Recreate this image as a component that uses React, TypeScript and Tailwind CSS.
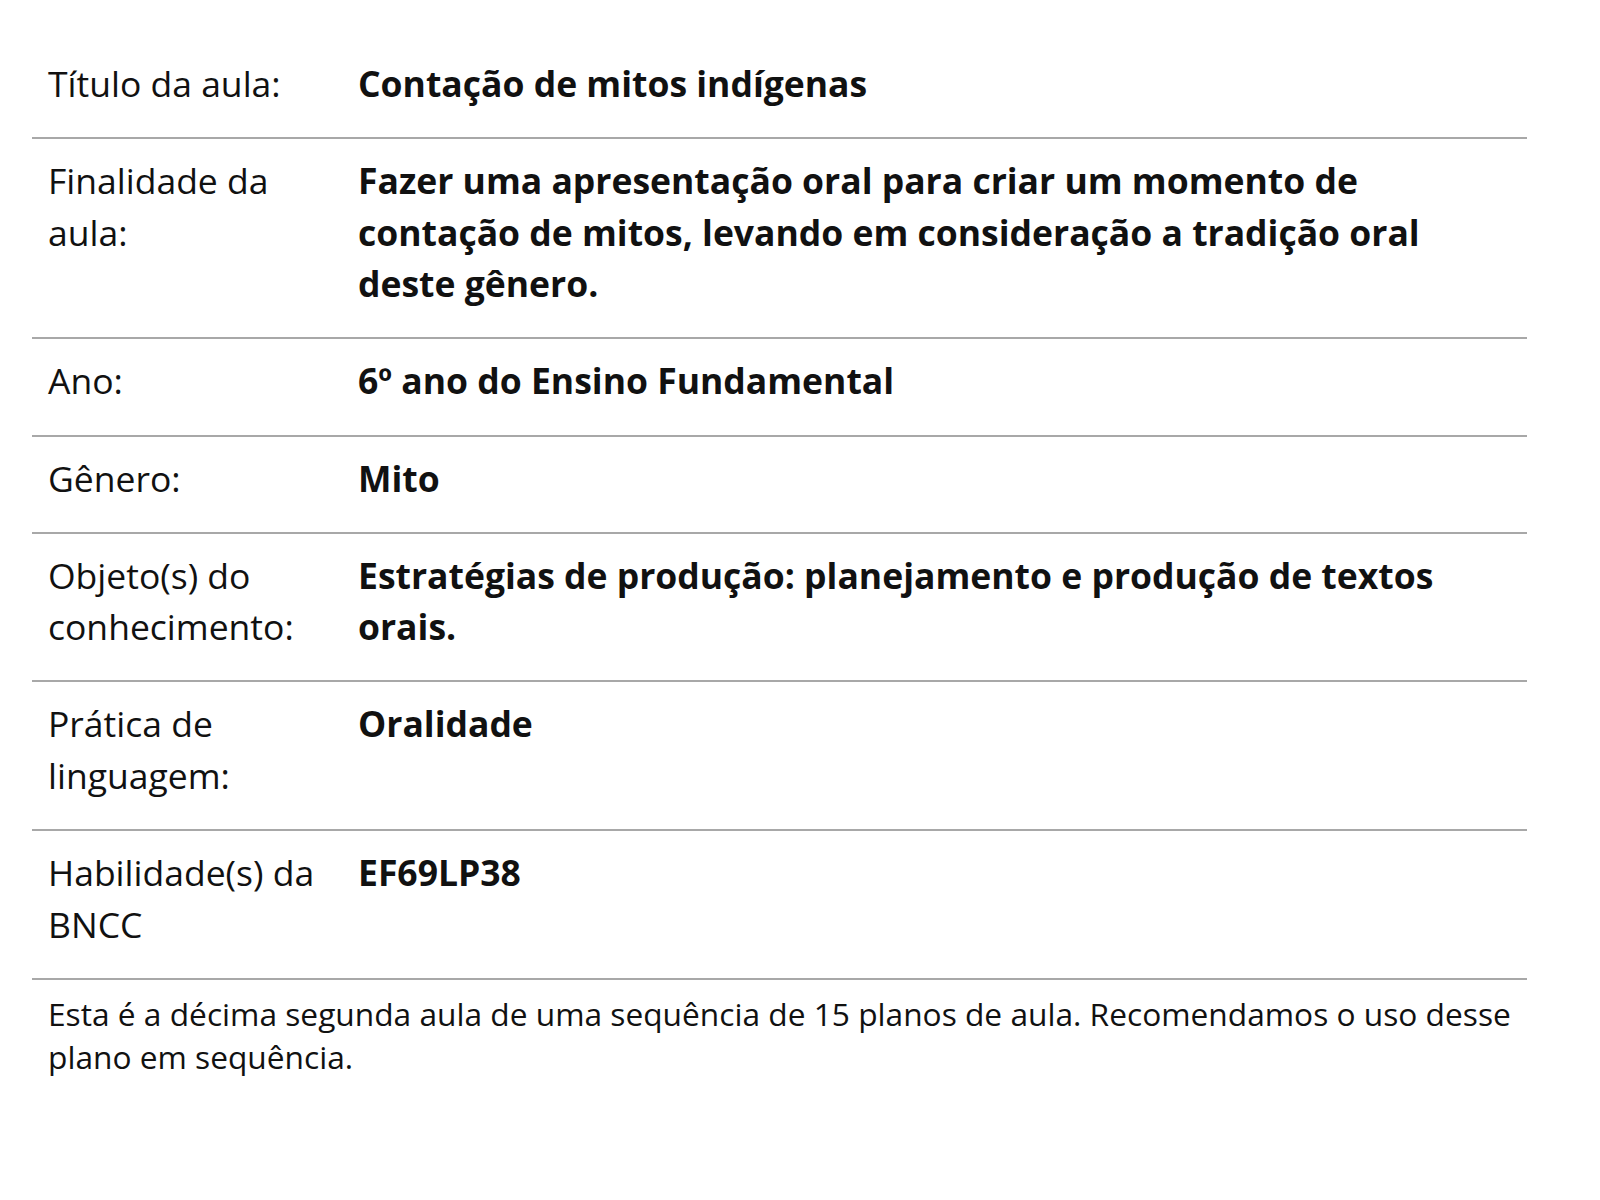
import React from "react";

const rows: { label: string; value: string }[] = [
  { label: "Título da aula:", value: "Contação de mitos indígenas" },
  {
    label: "Finalidade da aula:",
    value:
      "Fazer uma apresentação oral para criar um momento de contação de mitos, levando em consideração a tradição oral deste gênero.",
  },
  { label: "Ano:", value: "6º ano do Ensino Fundamental" },
  { label: "Gênero:", value: "Mito" },
  {
    label: "Objeto(s) do conhecimento:",
    value: "Estratégias de produção: planejamento e produção de textos orais.",
  },
  { label: "Prática de linguagem:", value: "Oralidade" },
  { label: "Habilidade(s) da BNCC", value: "EF69LP38" },
];

export default function App() {
  return (
    <div
      className="w-[1600px] min-h-[1200px] bg-white text-[#111]"
      style={{ fontFamily: '"Open Sans", "Noto Sans", sans-serif' }}
    >
      <div className="ml-[32px] w-[1495px] pt-[42px]">
        {rows.map((r) => (
          <div
            key={r.label}
            className="flex border-b-2 border-[#a8a8a8] pl-[16px] pr-[16px] pt-[16px] pb-[27.7px] text-[35.5px] leading-[51.5px]"
          >
            <div className="w-[310px] shrink-0 pr-[18px] font-normal">{r.label}</div>
            <div className="flex-1 font-bold">{r.value}</div>
          </div>
        ))}
        <p className="pl-[16px] pr-[16px] pt-[12px] text-[31.7px] leading-[43px]">
          Esta é a décima segunda aula de uma sequência de 15 planos de aula. Recomendamos o uso desse plano em
          sequência.
        </p>
      </div>
    </div>
  );
}
